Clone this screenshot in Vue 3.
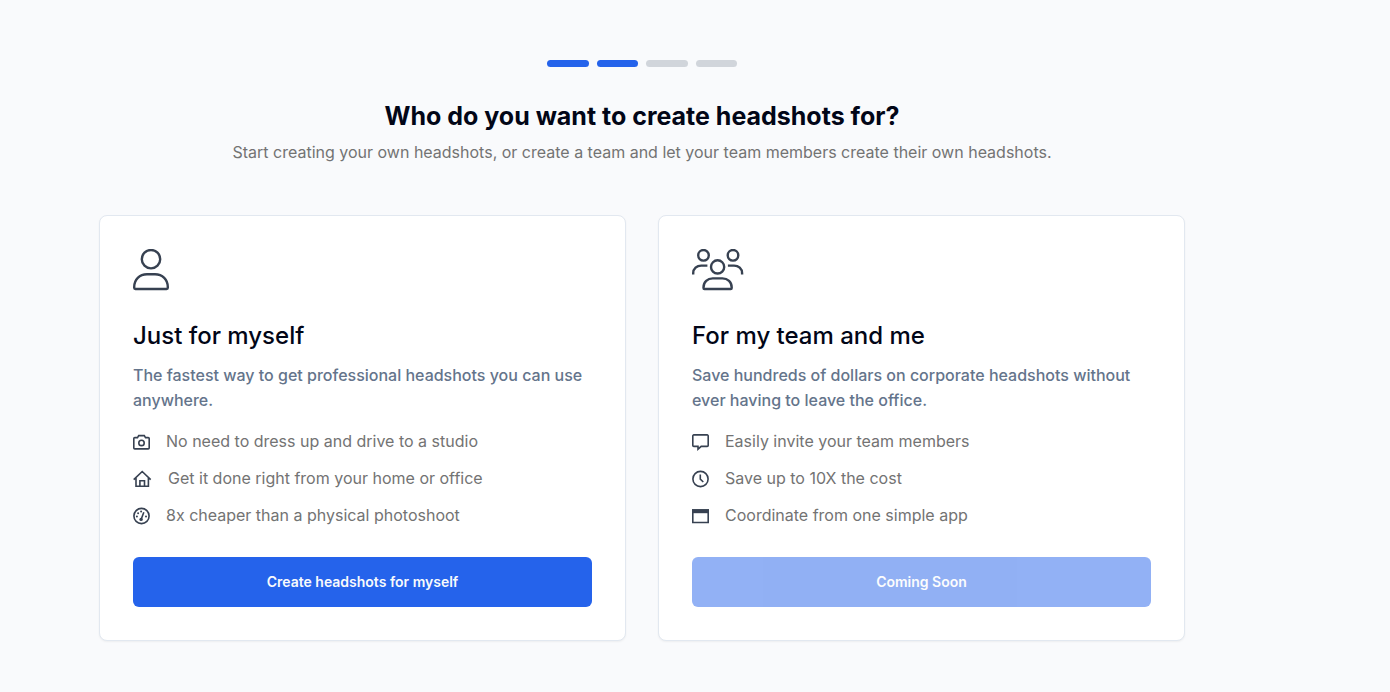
<script setup>
const steps = [true, true, false, false]

const plans = [
  {
    id: 'self',
    title: 'Just for myself',
    text: 'The fastest way to get professional headshots you can use anywhere.',
    features: [
      { icon: 'camera', label: 'No need to dress up and drive to a studio' },
      { icon: 'home', label: 'Get it done right from your home or office' },
      { icon: 'gauge', label: '8x cheaper than a physical photoshoot' },
    ],
    action: 'Create headshots for myself',
    disabled: false,
  },
  {
    id: 'team',
    title: 'For my team and me',
    text: 'Save hundreds of dollars on corporate headshots without ever having to leave the office.',
    features: [
      { icon: 'chat', label: 'Easily invite your team members' },
      { icon: 'clock', label: 'Save up to 10X the cost' },
      { icon: 'window', label: 'Coordinate from one simple app' },
    ],
    action: 'Coming Soon',
    disabled: true,
  },
]
</script>

<template>
  <main class="page">
    <header class="intro">
      <div class="steps" role="img" aria-label="Step 2 of 4">
        <span v-for="(done, i) in steps" :key="i" class="step" :class="{ done }"></span>
      </div>
      <h1>Who do you want to create headshots for?</h1>
      <p>Start creating your own headshots, or create a team and let your team members create their own headshots.</p>
    </header>

    <div class="cards">
      <section v-for="plan in plans" :key="plan.id" class="card">
        <svg v-if="plan.id === 'self'" class="figure" width="36" height="42" viewBox="0 0 36 42" aria-hidden="true">
          <circle cx="18" cy="10.2" r="9.2" />
          <path d="M1.2 38C1.2 30.500 6.500 25.200 14 25.200h8c7.500 0 12.800 5.300 12.800 12.800v.8a1.200 1.200 0 0 1-1.200 1.200H2.400A1.200 1.200 0 0 1 1.200 38.800z" />
        </svg>
        <svg v-else class="figure" width="52" height="42" viewBox="0 0 52 42" aria-hidden="true">
          <circle cx="11.500" cy="6.300" r="5.300" />
          <circle cx="41" cy="6.300" r="5.300" />
          <circle cx="25.600" cy="17.900" r="6.600" />
          <path d="M1.200 25.400v-1.200c0-4.500 3.600-7.600 8-7.600h6.200M35.900 16.600h6.200c4.400 0 8 3.100 8 7.600v1.200" />
          <path d="M11.500 38.400c0-5.400 4-9 9.300-9h9.600c5.300 0 9.300 3.600 9.300 9v.6a1 1 0 0 1-1 1H12.500a1 1 0 0 1-1-1z" />
        </svg>

        <h2>{{ plan.title }}</h2>
        <p class="summary">{{ plan.text }}</p>

        <ul class="features">
          <li v-for="f in plan.features" :key="f.icon">
            <svg v-if="f.icon === 'camera'" width="17" height="18" viewBox="0 0 17 18" aria-hidden="true">
              <path d="M1.800 4.600h2.700l1.200-2h5.600l1.200 2h2.700a1 1 0 0 1 1 1v9.300a1 1 0 0 1-1 1H1.800a1 1 0 0 1-1-1V5.600a1 1 0 0 1 1-1z" />
              <circle cx="8.500" cy="9.900" r="2.700" />
            </svg>
            <svg v-else-if="f.icon === 'home'" width="19" height="18" viewBox="0 0 19 18" aria-hidden="true">
              <path d="M.7 9.600 9.200 1.500l8.500 8.100M3 7.700v8.500h12.400V7.700M6.900 16v-5.300h4.600V16" />
            </svg>
            <svg v-else-if="f.icon === 'gauge'" width="17" height="18" viewBox="0 0 17 18" aria-hidden="true">
              <circle cx="8.500" cy="9" r="7.600" />
              <path d="m8.200 12.200 2.600-6.900" />
              <circle class="solid" cx="8.100" cy="12.400" r="1.700" />
              <circle class="solid" cx="3.900" cy="9.400" r="1" />
              <circle class="solid" cx="5.100" cy="6.300" r="1" />
              <circle class="solid" cx="8.100" cy="4.600" r="1" />
              <circle class="solid" cx="13" cy="9.400" r="1" />
            </svg>
            <svg v-else-if="f.icon === 'chat'" width="17" height="18" viewBox="0 0 17 18" aria-hidden="true">
              <path d="M1.800 1.900h13.400a1 1 0 0 1 1 1v9.500a1 1 0 0 1-1 1H9.200L6 16.200v-2.800H1.800a1 1 0 0 1-1-1V2.900a1 1 0 0 1 1-1z" />
            </svg>
            <svg v-else-if="f.icon === 'clock'" width="17" height="18" viewBox="0 0 17 18" aria-hidden="true">
              <circle cx="8.500" cy="9" r="7.600" />
              <path d="M8.300 4.600v4.600l3 2.800" />
            </svg>
            <svg v-else width="17" height="18" viewBox="0 0 17 18" aria-hidden="true">
              <path d="M.8 3h15.400v12.500H.8z" />
              <path class="solid" d="M0 2.200h17v4H0z" />
            </svg>
            <span>{{ f.label }}</span>
          </li>
        </ul>

        <button type="button" :disabled="plan.disabled">{{ plan.action }}</button>
      </section>
    </div>
  </main>
</template>

<style>
body {
  background: #f9fafc;
}
</style>

<style scoped>
.page {
  padding: 60px 205px 50px 99px;
  font-family: Inter, "Liberation Sans", sans-serif;
  font-size: 16px;
  color: #020617;
}
.intro {
  text-align: center;
}
.steps {
  display: flex;
  gap: 8px;
  width: 190px;
  margin: 0 auto;
}
.step {
  flex: 1;
  height: 7px;
  border-radius: 4px;
  background: #d1d5db;
}
.step.done {
  background: #2563eb;
}
h1 {
  margin: 32px 0 0;
  font-size: 25px;
  line-height: 34px;
  font-weight: 700;
}
.intro p {
  margin: 7px 0 0;
  line-height: 25px;
  color: #737373;
}
.cards {
  display: grid;
  grid-template-columns: 1fr 1fr;
  gap: 32px;
  margin-top: 50px;
}
.card {
  display: flex;
  flex-direction: column;
  padding: 33px;
  border: 1px solid #e2e8f0;
  border-radius: 8px;
  background: #fff;
  box-shadow: 0 1px 2px rgba(0, 0, 0, 0.05);
}
svg {
  flex: none;
  fill: none;
  stroke: #374151;
  stroke-width: 1.6;
}
.figure {
  stroke-width: 2.4;
}
.solid {
  fill: #374151;
  stroke: none;
}
h2 {
  margin: 28px 0 0;
  font-size: 24px;
  line-height: 34px;
  font-weight: 500;
}
.summary {
  margin: 10px 0 0;
  line-height: 25px;
  font-weight: 500;
  color: #64748b;
}
.features {
  display: grid;
  gap: 12px;
  margin: 16px 0 0;
  padding: 0;
  list-style: none;
  line-height: 25px;
  color: #737373;
}
.features li {
  display: flex;
  align-items: center;
  gap: 16px;
}
.features svg {
  margin-top: 1px;
}
button {
  height: 50px;
  margin-top: 29px;
  padding: 0 16px 2px;
  border: 0;
  border-radius: 6px;
  background: #2563eb;
  color: #f8fafc;
  font-family: inherit;
  font-size: 14px;
  font-weight: 600;
  cursor: pointer;
}
button:disabled {
  opacity: 0.5;
  cursor: default;
}
</style>
